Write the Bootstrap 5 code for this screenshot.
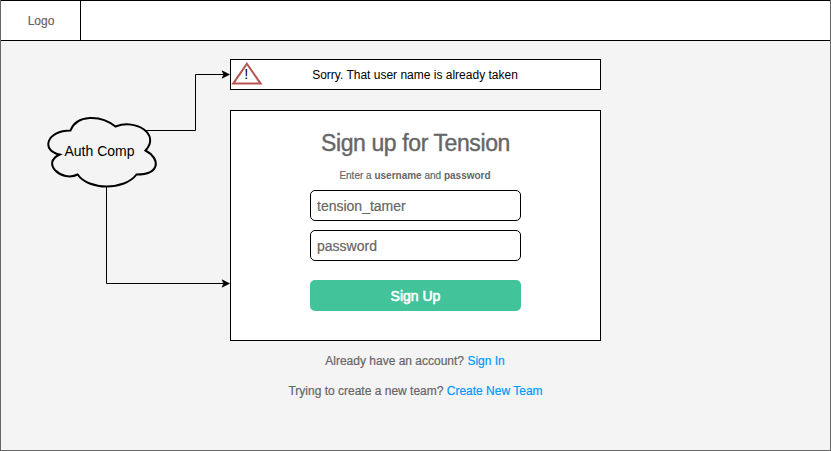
<!DOCTYPE html>
<html lang="en">
<head>
<meta charset="utf-8">
<meta name="viewport" content="width=device-width, initial-scale=1">
<title>Sign up for Tension</title>
<link href="https://cdn.jsdelivr.net/npm/bootstrap@5.3.0/dist/css/bootstrap.min.css" rel="stylesheet">
<style>
body { font-family: "Liberation Sans", Arial, sans-serif; font-size: 12px; line-height: 14px; color: #666; -webkit-text-stroke: .2px; }
.frame { height: 451px; background: #f4f4f4; border: 1px solid #666; border-top: 0; }
.topbar { height: 41px; margin: 0 -1px; border: 1px solid #000; }
.logo-cell { width: 80px; border-right: 1px solid #000; padding-left: 1px; }
.center-col { width: 371px; margin: 18px 0 0 229px; }
.notice { height: 31px; border: 1px solid #000; color: #000; margin-bottom: 20px; padding-right: 1px; -webkit-text-stroke: 0; }
.notice-icon { width: 32px; height: 29px; left: 0; top: 0; }
.signup { height: 231px; border: 1px solid #000; padding: 18px 79px 0; }
.signup h1 { font-size: 23px; line-height: 28px; margin: 0 0 13px; font-weight: 400; letter-spacing: -.4px; white-space: nowrap; color: #666; -webkit-text-stroke: .4px; }
.hint { font-size: 10px; line-height: 12px; margin: 0 0 8px -1px; }
.hint b { -webkit-text-stroke: 0; }
.signup .form-control { height: 31px; padding: 0 6px; border: 1px solid #000; border-radius: 5px; font-size: 14px; line-height: 29px; color: #666; margin-bottom: 9px; }
.signup .btn { height: 31px; margin-top: 19px; padding: 0; border: 0; border-radius: 5px; background: #43c39a; color: #fff; font-size: 14px; line-height: 32px; font-weight: 400; -webkit-text-stroke: .6px; }
.foot { height: 30px; padding: 13px 1px 0 0; }
.foot + .foot { padding-right: 0; }
.foot a { color: #0099ff; }
</style>
</head>
<body>
<div class="frame position-relative overflow-hidden">
  <header class="topbar bg-white d-flex">
    <div class="logo-cell d-flex align-items-center justify-content-center">Logo</div>
  </header>
  <main class="center-col">
    <div class="notice bg-white position-relative d-flex align-items-center justify-content-center">
      <svg class="notice-icon position-absolute" viewBox="231 60 32 29">
        <path d="M246.9 63.8L260.6 83.6H233.2Z" fill="#fff" stroke="#b85450" stroke-width="2"/>
        <text x="246.2" y="79" text-anchor="middle" font-size="14.500" fill="#000">!</text>
      </svg>
      <span class="notice-text">Sorry. That user name is already taken</span>
    </div>
    <form class="signup bg-white text-center">
      <h1>Sign up for Tension</h1>
      <p class="hint">Enter a <b>username</b> and <b>password</b></p>
      <input class="form-control" type="text" value="tension_tamer" aria-label="Username">
      <input class="form-control mb-0" type="text" value="password" aria-label="Password">
      <button class="btn w-100 d-block" type="button">Sign Up</button>
    </form>
    <div class="foot text-center">Already have an account? <a class="text-decoration-none" href="#">Sign In</a></div>
    <div class="foot text-center">Trying to create a new team? <a class="text-decoration-none" href="#">Create New Team</a></div>
  </main>
  <svg class="position-absolute top-0 start-0 pe-none" width="231" height="300" viewBox="1 0 231 300">
    <g fill="none" stroke="#000">
      <path d="M146 130.500H195.500V74.500H224"/>
      <path d="M106.500 186V283.500H224"/>
    </g>
    <path d="M229.500 74.500L222 78.200L223.800 74.500L222 70.800ZM229.500 283.500L222 287.200L223.800 283.500L222 279.800Z" stroke="#000" stroke-width=".6"/>
    <path transform="translate(40.500 110.500)" d="M30 20C6 20 0 40 19.200 44C0 52.800 21.600 72 37.200 64C48 80 84 80 96 64C120 64 120 48 105 40C120 24 96 8 75 16C60 4 36 4 30 20Z" fill="#f4f4f4" stroke="#000" stroke-width="2" stroke-miterlimit="10"/>
    <text x="99.500" y="156" text-anchor="middle" font-size="14" stroke="none">Auth Comp</text>
  </svg>
</div>
<script src="https://cdn.jsdelivr.net/npm/bootstrap@5.3.0/dist/js/bootstrap.bundle.min.js"></script>
</body>
</html>
